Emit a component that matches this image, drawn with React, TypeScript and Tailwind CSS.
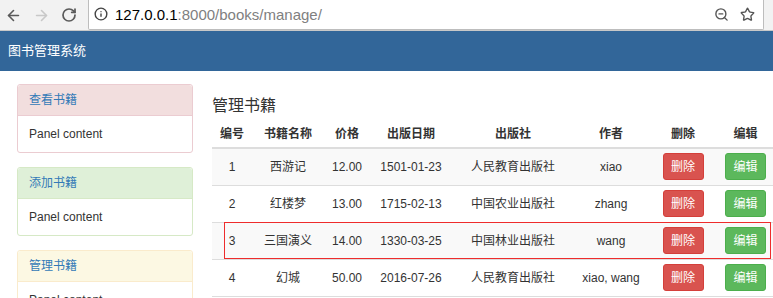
import { ArrowLeft, ArrowRight, RotateCw, Info, ZoomOut, Star } from 'lucide-react';

const books = [
  { id: 1, name: '西游记', price: '12.00', date: '1501-01-23', publisher: '人民教育出版社', author: 'xiao' },
  { id: 2, name: '红楼梦', price: '13.00', date: '1715-02-13', publisher: '中国农业出版社', author: 'zhang' },
  { id: 3, name: '三国演义', price: '14.00', date: '1330-03-25', publisher: '中国林业出版社', author: 'wang' },
  { id: 4, name: '幻城', price: '50.00', date: '2016-07-26', publisher: '人民教育出版社', author: 'xiao, wang' },
];

const panels = [
  { title: '查看书籍', head: 'bg-[#f2dede] border-[#ebccd1]', border: 'border-[#ebccd1]' },
  { title: '添加书籍', head: 'bg-[#dff0d8] border-[#d6e9c6]', border: 'border-[#d6e9c6]' },
  { title: '管理书籍', head: 'bg-[#fcf8e3] border-[#faebcc]', border: 'border-[#faebcc]' },
];

const font = "font-['Liberation_Sans','Noto_Sans_CJK_SC',sans-serif]";

export default function App() {
  return (
    <div className={`relative w-[773px] h-[298px] overflow-hidden bg-white text-[#333] ${font}`}>
      {/* Browser chrome */}
      <div className="flex h-[31px] items-end bg-[#f2f2f2] border-b border-[#c8c8c8]">
        <div className="flex w-[88px] h-[30px] items-center gap-[11px] pl-[5px]">
          <ArrowLeft className="w-[17px] h-[17px] text-[#5a5a5a]" strokeWidth={2.3} />
          <ArrowRight className="w-[17px] h-[17px] text-[#c8c8c8]" strokeWidth={2.3} />
          <RotateCw className="w-[16px] h-[16px] text-[#5a5a5a]" strokeWidth={2.6} />
        </div>
        <div className="flex h-[31px] w-[676px] items-center bg-white border border-t-0 border-[#bdbdbd] rounded-b-[2px] pl-[5px] pr-[8px]">
          <Info className="w-[14px] h-[14px] text-[#444]" strokeWidth={2.4} />
          <span className="ml-[7px] text-[15px] leading-none text-black">127.0.0.1</span>
          <span className="text-[15px] leading-none text-[#808080]">:8000/books/manage/</span>
          <div className="ml-auto flex items-center gap-[11px]">
            <ZoomOut className="w-[15px] h-[15px] text-[#555]" strokeWidth={2.2} />
            <Star className="w-[15px] h-[15px] text-[#555]" strokeWidth={2.2} />
          </div>
        </div>
      </div>

      {/* Navbar */}
      <div className="flex h-[40px] items-center bg-[#326699] px-[8px]">
        <span className="text-[13px] text-white">图书管理系统</span>
      </div>

      <div className="flex pt-[13px]">
        {/* Sidebar */}
        <div className="ml-[17px] w-[176px] flex flex-col gap-[14px]">
          {panels.map((p) => (
            <div key={p.title} className={`border ${p.border} rounded-[3px] bg-white`}>
              <div className={`h-[31px] flex items-center px-[11px] border-b ${p.head} rounded-t-[3px] text-[12px] text-[#337ab7]`}>
                {p.title}
              </div>
              <div className="h-[36px] flex items-center px-[11px] text-[12px]">Panel content</div>
            </div>
          ))}
        </div>

        {/* Main */}
        <div className="ml-[19px] flex-1 pt-[12px]">
          <h2 className="text-[16px] leading-[20px] text-[#333]">管理书籍</h2>
          <table className="mt-[1px] w-[561px] table-fixed border-collapse text-[12px]">
            <colgroup>
              <col className="w-[40px]" />
              <col className="w-[72px]" />
              <col className="w-[46px]" />
              <col className="w-[82px]" />
              <col className="w-[122px]" />
              <col className="w-[74px]" />
              <col className="w-[70px]" />
              <col className="w-[55px]" />
            </colgroup>
            <thead>
              <tr className="h-[31px] border-b-2 border-[#ddd]">
                {['编号', '书籍名称', '价格', '出版日期', '出版社', '作者', '删除', '编辑'].map((h) => (
                  <th key={h} className="font-bold text-center pt-[3px]">{h}</th>
                ))}
              </tr>
            </thead>
            <tbody>
              {books.map((b, i) => (
                <tr key={b.id} className={`h-[37px] border-b border-[#ddd] ${i % 2 === 0 ? 'bg-[#f9f9f9]' : 'bg-white'}`}>
                  <td className="text-center">{b.id}</td>
                  <td className="text-center">{b.name}</td>
                  <td className="text-center">{b.price}</td>
                  <td className="text-center">{b.date}</td>
                  <td className="text-center">{b.publisher}</td>
                  <td className="text-center">{b.author}</td>
                  <td className="text-center">
                    <button className="w-[41px] h-[27px] rounded-[3px] bg-[#d9534f] border border-[#d43f3a] text-white text-[12px]">删除</button>
                  </td>
                  <td className="text-center">
                    <button className="w-[41px] h-[27px] rounded-[3px] bg-[#5cb85c] border border-[#4cae4c] text-white text-[12px]">编辑</button>
                  </td>
                </tr>
              ))}
            </tbody>
          </table>
        </div>
      </div>

      {/* hover outline over row 3 */}
      <div className="absolute left-[225px] top-[223px] w-[545px] h-[35px] outline outline-1 outline-[#ee2c2c] pointer-events-none" />
    </div>
  );
}
